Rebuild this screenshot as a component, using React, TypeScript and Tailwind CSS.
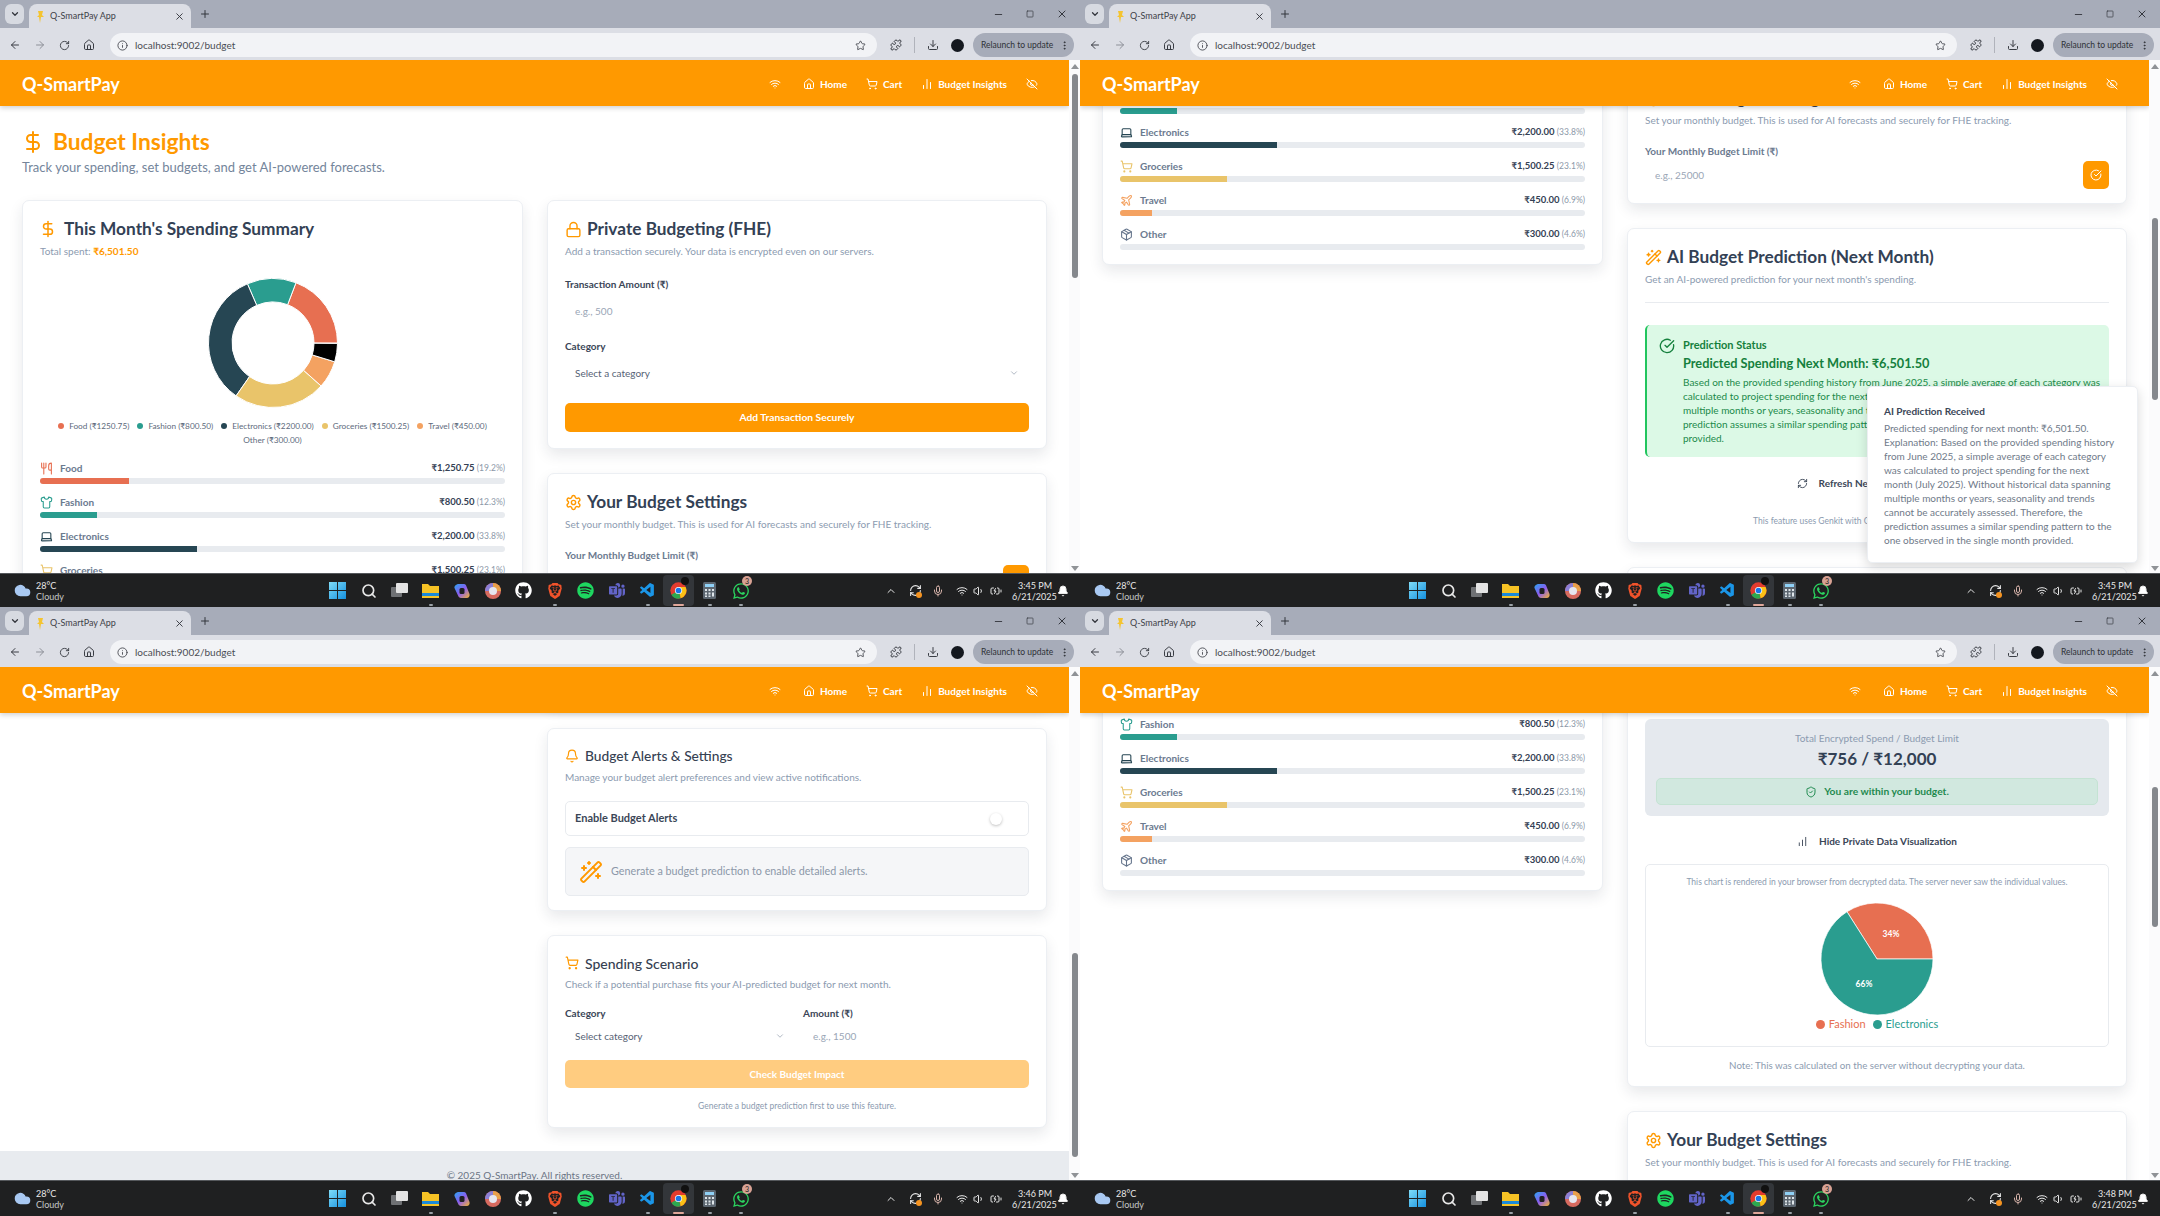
import {
  ArrowLeft, ArrowRight, Bell, BatteryCharging, ChartNoAxesColumn, ChartNoAxesColumnIncreasing, ChevronDown, ChevronUp,
  CircleCheckBig, Cloud, DollarSign, Download, EllipsisVertical, EyeOff, Home, Info, Laptop, Lock, Mic, Minus, Package,
  Plane, Plus, Puzzle, RefreshCw, RotateCw, Search, Settings, Shirt, ShieldCheck, ShoppingCart, Square, Star, Utensils,
  Volume1, WandSparkles, Wifi, X,
} from 'lucide-react';
import { BsMicrosoftTeams } from 'react-icons/bs';
import { FaGithub, FaSpotify, FaWhatsapp } from 'react-icons/fa';
import { SiBrave } from 'react-icons/si';
import { VscVscode } from 'react-icons/vsc';
import type { ReactNode } from 'react';

const categories = [
  { name: 'Food', amount: '₹1,250.75', legend: '₹1250.75', pct: 19.2, color: '#E76F51', Icon: Utensils },
  { name: 'Fashion', amount: '₹800.50', legend: '₹800.50', pct: 12.3, color: '#2A9D8F', Icon: Shirt },
  { name: 'Electronics', amount: '₹2,200.00', legend: '₹2200.00', pct: 33.8, color: '#264653', Icon: Laptop },
  { name: 'Groceries', amount: '₹1,500.25', legend: '₹1500.25', pct: 23.1, color: '#E9C46A', Icon: ShoppingCart },
  { name: 'Travel', amount: '₹450.00', legend: '₹450.00', pct: 6.9, color: '#F4A261', Icon: Plane },
  { name: 'Other', amount: '₹300.00', legend: '₹300.00', pct: 4.6, color: '#000000', Icon: Package },
];

const predictionLines = [
  'Based on the provided spending history from June 2025, a simple average of each category was',
  'calculated to project spending for the next month (July 2025). Without historical data spanning',
  'multiple months or years, seasonality and trends cannot be accurately assessed. Therefore, the',
  'prediction assumes a similar spending pattern to the one observed in the single month',
  'provided.',
];

const toastLines = [
  'Predicted spending for next month: ₹6,501.50.',
  'Explanation: Based on the provided spending history',
  'from June 2025, a simple average of each category',
  'was calculated to project spending for the next',
  'month (July 2025). Without historical data spanning',
  'multiple months or years, seasonality and trends',
  'cannot be accurately assessed. Therefore, the',
  'prediction assumes a similar spending pattern to the',
  'one observed in the single month provided.',
];

// start angle at 3 o'clock, going counter clockwise like the chart lib does
function slicePath(cx: number, cy: number, inner: number, outer: number, from: number, to: number) {
  const pt = (r: number, deg: number) => {
    const a = (deg * Math.PI) / 180;
    return `${(cx + r * Math.cos(a)).toFixed(2)} ${(cy - r * Math.sin(a)).toFixed(2)}`;
  };
  const large = to - from > 180 ? 1 : 0;
  if (inner === 0) return `M${cx} ${cy} L${pt(outer, from)} A${outer} ${outer} 0 ${large} 0 ${pt(outer, to)} Z`;
  return `M${pt(outer, from)} A${outer} ${outer} 0 ${large} 0 ${pt(outer, to)} L${pt(inner, to)} A${inner} ${inner} 0 ${large} 1 ${pt(inner, from)} Z`;
}

function Donut() {
  let angle = 0;
  return (
    <svg width="132" height="132" viewBox="0 0 132 132">
      {categories.map((c) => {
        const from = angle;
        angle += (c.pct / 100) * 360;
        return <path key={c.name} d={slicePath(66, 66, 41, 64.5, from, Math.min(angle, 360))} fill={c.color} stroke="#fff" strokeWidth="1" />;
      })}
    </svg>
  );
}

function Card({ children, className = '' }: { children: ReactNode; className?: string }) {
  return (
    <div className={`rounded-[7px] border border-[#eceff3] bg-white px-[17px] pt-[17px] shadow-[0_6px_14px_rgba(30,41,59,0.1)] ${className}`}>
      {children}
    </div>
  );
}

function CardTitle({ icon, title, desc }: { icon: ReactNode; title: string; desc: ReactNode }) {
  return (
    <>
      <div className="flex h-[22px] items-center gap-[5px]">
        {icon}
        <h2 className="text-[17.25px] font-bold text-[#334155]">{title}</h2>
      </div>
      <p className="mt-[4px] text-[10px] leading-[14px] text-[#8c9bb0]">{desc}</p>
    </>
  );
}

function Field({ label, placeholder }: { label: string; placeholder: string }) {
  return (
    <>
      <label className="block text-[10px] font-bold leading-[14px] text-[#3b4657]">{label}</label>
      <input placeholder={placeholder} className="mt-[5px] mb-[1px] h-[30px] w-full bg-transparent px-[10px] text-[10px] outline-none placeholder:text-[#9aa6b6]" />
    </>
  );
}

function SelectBox({ text }: { text: string }) {
  return (
    <div className="flex h-[30px] items-center justify-between px-[10px] text-[10px] text-[#566275]">
      {text}
      <ChevronDown size={10} className="text-[#a2acb9]" />
    </div>
  );
}

function SummaryCard() {
  return (
    <Card className="h-[469px]">
      <div className="-ml-[1px] flex h-[22px] items-center gap-[7px]">
        <DollarSign size={18} className="text-[#FF9900]" />
        <h2 className="text-[17.25px] font-bold text-[#334155]">This Month's Spending Summary</h2>
      </div>
      <p className="mt-[4px] text-[10px] leading-[14px] text-[#8c9bb0]">
        Total spent: <span className="font-bold text-[#FF9900]">₹6,501.50</span>
      </p>
      <div className="mt-[19px] flex justify-center">
        <Donut />
      </div>
      <div className="mt-[10px] flex flex-wrap justify-center gap-x-[8px] text-[8.25px] leading-[14px] text-[#5d6a7c]">
        {categories.map((c) => (
          <span key={c.name} className="flex items-center gap-[5px]">
            {c.name !== 'Other' && <i className="h-[6px] w-[6px] rounded-full" style={{ backgroundColor: c.color }} />}
            {c.name} ({c.legend})
          </span>
        ))}
      </div>
      <div className="mt-[12px] flex flex-col gap-[9px]">
        {categories.map((c) => (
          <div key={c.name}>
            <div className="flex h-[18px] items-center justify-between">
              <span className="flex items-center gap-[7px] text-[10px] font-bold text-[#6b7a8f]">
                <c.Icon size={13} style={{ color: c.name === 'Other' ? '#64748b' : c.color }} />
                {c.name}
              </span>
              <span className="text-[9.5px] font-bold text-[#344154]">
                {c.amount} <span className="text-[8.5px] font-normal text-[#8c98a8]">({c.pct}%)</span>
              </span>
            </div>
            <div className="mt-[1px] h-[6px] overflow-hidden rounded-full bg-[#e8ebef]">
              {c.name !== 'Other' && <div className="h-full" style={{ width: `${c.pct}%`, backgroundColor: c.color }} />}
            </div>
          </div>
        ))}
      </div>
    </Card>
  );
}

function FheResult() {
  return (
    <div className="-mb-[2px]">
      <div className="mt-[65px] h-[97px] rounded-[6px] bg-[#e5e9ee] px-[11px] pt-[12px] text-center">
        <p className="text-[10px] leading-[14px] text-[#8c9bb0]">Total Encrypted Spend / Budget Limit</p>
        <p className="mt-[2px] text-[17px] font-bold leading-[24px] text-[#334155]">₹756 / ₹12,000</p>
        <div className="mt-[7px] flex h-[27px] items-center justify-center gap-[7px] rounded-[5px] border border-[#c4e3d3] bg-[#d1e8df] text-[10.25px] font-bold text-[#1f8a4f]">
          <ShieldCheck size={12} />
          You are within your budget.
        </div>
      </div>
      <div className="mt-[13px] flex h-[24px] items-center justify-center gap-[11px] text-[10px] font-bold text-[#3b4657]">
        <ChartNoAxesColumnIncreasing size={11} />
        Hide Private Data Visualization
      </div>
      <div className="mt-[11px] h-[183px] rounded-[5px] border border-[#e8ebef] pt-[10px]">
        <p className="text-center text-[8.5px] leading-[14px] text-[#8c9bb0]">This chart is rendered in your browser from decrypted data. The server never saw the individual values.</p>
        <div className="mt-[13px] flex justify-center">
          <svg width="114" height="114" viewBox="0 0 114 114">
            <path d={slicePath(57, 57, 0, 56, 0, 122.4)} fill="#E76F51" stroke="#fff" strokeWidth="0.7" />
            <path d={slicePath(57, 57, 0, 56, 122.4, 360)} fill="#2A9D8F" stroke="#fff" strokeWidth="0.7" />
            <text x="71" y="35" textAnchor="middle" fontSize="8.5" fontWeight="700" fill="#fff">34%</text>
            <text x="44" y="85" textAnchor="middle" fontSize="8.5" fontWeight="700" fill="#fff">66%</text>
          </svg>
        </div>
        <div className="-mt-[1px] flex items-center justify-center gap-[7px] text-[11px] leading-[18px]">
          <span className="flex items-center gap-[4px] text-[#E76F51]"><i className="h-[9px] w-[9px] rounded-full bg-[#E76F51]" />Fashion</span>
          <span className="flex items-center gap-[4px] text-[#2A9D8F]"><i className="h-[9px] w-[9px] rounded-full bg-[#2A9D8F]" />Electronics</span>
        </div>
      </div>
      <p className="mt-[11px] text-center text-[9.75px] leading-[14px] text-[#8c9bb0]">Note: This was calculated on the server without decrypting your data.</p>
    </div>
  );
}

function Page({ showResult, scroll }: { showResult?: boolean; scroll: string }) {
  return (
    <div className={`w-full ${scroll}`}>
      <div className="h-[94px] px-[22px] pt-[23px]">
        <div className="flex h-[26px] items-center gap-[9px]">
          <DollarSign size={24} className="-ml-[1px] -mr-[1px] text-[#FF9900]" />
          <h1 className="text-[22.75px] font-bold text-[#FF9900]">Budget Insights</h1>
        </div>
        <p className="mt-[2px] text-[13px] leading-[20px] text-[#74859b]">Track your spending, set budgets, and get AI-powered forecasts.</p>
      </div>
      <div className="grid grid-cols-[501px_500px] items-start gap-x-[24px] px-[22px]">
        <SummaryCard />
        <div className="flex flex-col gap-[24px]">
          <Card className="pb-[16px]">
            <CardTitle icon={<Lock size={17} className="text-[#FF9900]" />} title="Private Budgeting (FHE)" desc="Add a transaction securely. Your data is encrypted even on our servers." />
            <div className="mt-[19px]">
              <Field label="Transaction Amount (₹)" placeholder="e.g., 500" />
            </div>
            <label className="mt-[12px] block text-[10px] font-bold leading-[14px] text-[#3b4657]">Category</label>
            <div className="mt-[5px]"><SelectBox text="Select a category" /></div>
            <button className="mt-[15px] h-[29px] w-full rounded-[5px] bg-[#FF9900] text-[10.25px] font-bold text-white">Add Transaction Securely</button>
            {showResult && <FheResult />}
          </Card>
          <Card className="pb-[13px]">
            <CardTitle icon={<Settings size={17} className="text-[#FF9900]" />} title="Your Budget Settings" desc="Set your monthly budget. This is used for AI forecasts and securely for FHE tracking." />
            <label className="mt-[17px] block text-[10px] font-bold leading-[14px] text-[#6b7a8f]">Your Monthly Budget Limit (₹)</label>
            <div className="mt-[2px] flex items-center justify-between">
              <input placeholder="e.g., 25000" className="h-[30px] flex-1 bg-transparent px-[10px] text-[10px] outline-none placeholder:text-[#9aa6b6]" />
              <button className="flex h-[28px] w-[26px] items-center justify-center rounded-[5px] bg-[#FF9900] text-white"><CircleCheckBig size={12} /></button>
            </div>
          </Card>
          <Card className="h-[315px]">
            <CardTitle icon={<WandSparkles size={17} className="text-[#FF9900]" />} title="AI Budget Prediction (Next Month)" desc="Get an AI-powered prediction for your next month's spending." />
            <hr className="mt-[16px] border-[#e8ebef]" />
            <div className="mt-[22px] flex h-[132px] rounded-[5px] border-l-[2.5px] border-[#22C55E] bg-[#DCF9E6] pl-[12px] pt-[13px] text-[#1b8a4a]">
              <CircleCheckBig size={16} className="shrink-0 text-[#15803D]" />
              <div className="ml-[8px]">
                <p className="text-[11px] font-bold leading-[14px] text-[#15803D]">Prediction Status</p>
                <p className="mt-[2px] text-[12.75px] font-bold leading-[18px] text-[#15803D]">Predicted Spending Next Month: ₹6,501.50</p>
                <div className="mt-[3px] text-[10px] leading-[14px]">
                  {predictionLines.map((l) => <div key={l} className="whitespace-nowrap">{l}</div>)}
                </div>
              </div>
            </div>
            <div className="mt-[14px] flex h-[24px] items-center justify-center gap-[11px] text-[10px] font-bold text-[#3b4657]">
              <RefreshCw size={11} />
              Refresh Next Month Prediction
            </div>
            <p className="mt-[19px] text-center text-[8.5px] leading-[14px] text-[#8c9bb0]">This feature uses Genkit with Gemini to analyze spending patterns.</p>
          </Card>
          <Card className="h-[183px]">
            <div className="flex h-[20px] items-center gap-[6px]">
              <Bell size={14} className="text-[#FF9900]" />
              <h2 className="text-[13.75px] font-medium text-[#364152]">Budget Alerts &amp; Settings</h2>
            </div>
            <p className="mt-[4px] text-[10px] leading-[14px] text-[#8c9bb0]">Manage your budget alert preferences and view active notifications.</p>
            <div className="mt-[17px] flex h-[35px] items-center justify-between rounded-[5px] border border-[#e8ebef] pl-[9px] pr-[26px] text-[11px] font-bold text-[#3b4657]">
              Enable Budget Alerts
              <i className="h-[12px] w-[12px] rounded-full bg-white shadow-[0_1px_3px_rgba(0,0,0,0.25)]" />
            </div>
            <div className="mt-[11px] flex h-[49px] items-center gap-[8px] rounded-[5px] border border-[#e8ebef] bg-[#f5f6f8] pl-[13px] text-[10.75px] text-[#8c98a8]">
              <WandSparkles size={24} className="text-[#FF9900]" />
              Generate a budget prediction to enable detailed alerts.
            </div>
          </Card>
          <Card className="h-[193px]">
            <div className="flex h-[20px] items-center gap-[6px]">
              <ShoppingCart size={14} className="text-[#FF9900]" />
              <h2 className="text-[14px] font-medium text-[#364152]">Spending Scenario</h2>
            </div>
            <p className="mt-[4px] text-[10px] leading-[14px] text-[#8c9bb0]">Check if a potential purchase fits your AI-predicted budget for next month.</p>
            <div className="mt-[15px] grid grid-cols-[230px_1fr] gap-x-[8px]">
              <div>
                <label className="block text-[10px] font-bold leading-[14px] text-[#3b4657]">Category</label>
                <div className="mt-[1px]"><SelectBox text="Select category" /></div>
              </div>
              <div>
                <label className="block text-[10px] font-bold leading-[14px] text-[#3b4657]">Amount (₹)</label>
                <div className="mt-[1px]"><input placeholder="e.g., 1500" className="h-[30px] w-full bg-transparent px-[10px] text-[10px] outline-none placeholder:text-[#9aa6b6]" /></div>
              </div>
            </div>
            <button className="mt-[9px] h-[28px] w-full rounded-[5px] bg-[#FFCC80] text-[10px] font-bold text-white">Check Budget Impact</button>
            <p className="mt-[11px] text-center text-[8.5px] leading-[14px] text-[#8c9bb0]">Generate a budget prediction first to use this feature.</p>
          </Card>
        </div>
      </div>
      <footer className="mt-[23px] h-[60px] bg-[#e8ebef] pt-[17px] text-center text-[10px] leading-[14px] text-[#6b7585]">© 2025 Q-SmartPay. All rights reserved.</footer>
    </div>
  );
}

function BrowserChrome() {
  return (
    <>
      <div className="flex h-[28px] items-end bg-[#a7acb9] pl-[5px] pr-[12px] text-[#33363d]">
        <span className="mb-[4px] flex h-[20px] w-[19px] items-center justify-center rounded-[6px] bg-[#d7dae1]"><ChevronDown size={10} strokeWidth={3} /></span>
        <div className="ml-[5px] flex h-[24px] w-[162px] items-center rounded-t-[8px] bg-[#dcdee5] pl-[7px] pr-[6px] text-[9px]">
          <svg width="9" height="13" viewBox="0 0 9 13"><path d="M2 1h5l-1 4 2 2H5l-1 6-1-6H1l2-2z" fill="#f4c430" /></svg>
          <span className="ml-[5px] flex-1 text-[#3f4249]">Q-SmartPay App</span>
          <X size={11} />
        </div>
        <Plus size={12} className="mb-[8px] ml-[8px]" />
        <div className="mb-[8px] ml-auto flex items-center gap-[22px]">
          <Minus size={11} />
          <Square size={8} />
          <X size={12} />
        </div>
      </div>
      <div className="flex h-[32px] items-center bg-[#dcdee5] pl-[9px] pr-[4px] pt-[2px] text-[#3a3d44]">
        <div className="flex w-[101px] items-center gap-[13px]">
          <ArrowLeft size={12} />
          <ArrowRight size={12} className="text-[#8d9098]" />
          <RotateCw size={11} />
          <Home size={12} />
        </div>
        <div className="flex h-[24px] w-[767px] items-center rounded-full bg-[#f2f3f6] pl-[7px] pr-[11px] text-[10px] text-[#4a4d54]">
          <Info size={11} />
          <span className="ml-[7px] flex-1">localhost:9002/budget</span>
          <Star size={11} />
        </div>
        <Puzzle size={12} className="ml-[13px]" />
        <span className="ml-[12px] h-[16px] w-px bg-[#b0b3bb]" />
        <Download size={12} className="ml-[12px]" />
        <span className="ml-[12px] h-[13px] w-[13px] rounded-full bg-[#14181f]" />
        <div className="ml-[9px] flex h-[24px] w-[101px] items-center justify-between whitespace-nowrap rounded-full bg-[#a7acb9] pl-[8px] pr-[4px] text-[8.5px] text-[#2e3137]">
          Relaunch to update
          <EllipsisVertical size={11} />
        </div>
      </div>
    </>
  );
}

function Navbar() {
  return (
    <nav className="relative z-10 flex h-[46px] w-[1069px] shrink-0 items-center justify-between bg-[#FF9900] pl-[22px] pr-[31px] pt-[2px] text-white shadow-[0_2px_5px_rgba(0,0,0,0.18)]">
      <span className="text-[18px] font-bold">Q-SmartPay</span>
      <div className="flex items-center gap-[19px] text-[10px] font-bold">
        <Wifi size={12} className="mr-[3px]" />
        <span className="flex items-center gap-[5px]"><Home size={12} />Home</span>
        <span className="flex items-center gap-[5px]"><ShoppingCart size={12} />Cart</span>
        <span className="flex items-center gap-[5px]"><ChartNoAxesColumn size={12} />Budget Insights</span>
        <EyeOff size={12} />
      </div>
    </nav>
  );
}

function TaskIcon({ children, running, active }: { children: ReactNode; running?: boolean; active?: boolean }) {
  return (
    <div className={`relative flex h-[31px] w-[31px] items-center justify-center rounded-[4px] ${active ? 'bg-[#33363a]' : ''}`}>
      {children}
      {running && <i className={`absolute bottom-0 h-[2px] rounded-full ${active ? 'w-[11px] bg-[#e0a79a]' : 'w-[4px] bg-[#9aa0a6]'}`} />}
    </div>
  );
}

function Taskbar({ time }: { time: string }) {
  return (
    <div className="flex flex-1 items-center border-t border-[#55585c] bg-[#1f2021] text-[9px] leading-[11px] text-[#e8e8e8]">
      <div className="ml-[14px] flex w-[308px] items-center gap-[5px]">
        <Cloud size={17} className="fill-[#a9c9f2] text-[#a9c9f2]" />
        <div>
          <div>28°C</div>
          <div className="text-[#c8c8c8]">Cloudy</div>
        </div>
      </div>
      <div className="flex items-center">
        <TaskIcon>
          <svg width="17" height="17" viewBox="0 0 17 17"><defs><linearGradient id="win" x1="0" y1="0" x2="1" y2="1"><stop offset="0" stopColor="#7fdcf8" /><stop offset="1" stopColor="#1490df" /></linearGradient></defs><path d="M0 0h8v8H0zM9 0h8v8H9zM0 9h8v8H0zM9 9h8v8H9z" fill="url(#win)" /></svg>
        </TaskIcon>
        <TaskIcon><Search size={16} strokeWidth={2.5} /></TaskIcon>
        <TaskIcon>
          <svg width="17" height="15" viewBox="0 0 17 15"><rect x="0" y="4" width="11" height="10" rx="1" fill="#6f7174" /><rect x="5" y="0" width="12" height="10" rx="1" fill="#e4e4e4" /></svg>
        </TaskIcon>
        <TaskIcon running>
          <svg width="17" height="16" viewBox="0 0 17 16"><path d="M0 1h6l2 2h9v12H0z" fill="#f7c325" /><rect y="10" width="17" height="3" fill="#1c8ad8" /></svg>
        </TaskIcon>
        <TaskIcon>
          <svg width="16" height="16" viewBox="0 0 16 16"><defs><linearGradient id="cop" x1="0" y1="0" x2="1" y2="1"><stop offset="0" stopColor="#2aa5f0" /><stop offset=".5" stopColor="#8a5cf0" /><stop offset="1" stopColor="#f5b52e" /></linearGradient></defs><path d="M5 1h5c1.5 0 2 1 2.5 2.5L15.500 11c.5 2-.5 4-3 4H7c-1.500 0-2.500-1-3-2.500L.5 5C0 3 2.500 1 5 1z" fill="url(#cop)" /><rect x="5.500" y="5" width="5" height="6" rx="1.500" fill="#1f2021" /></svg>
        </TaskIcon>
        <TaskIcon>
          <svg width="16" height="16" viewBox="0 0 16 16"><circle cx="8" cy="8" r="8" fill="#d76a5f" /><path d="M8 0a8 8 0 0 1 8 8H8z" fill="#e8a04a" /><path d="M0 8a8 8 0 0 1 8-8v8z" fill="#8b7fd6" /><circle cx="8" cy="8" r="4" fill="#e6e6ef" /></svg>
        </TaskIcon>
        <TaskIcon><FaGithub size={17} className="text-white" /></TaskIcon>
        <TaskIcon running><SiBrave size={16} className="text-[#f0532b]" /></TaskIcon>
        <TaskIcon><FaSpotify size={17} className="text-[#1ed760]" /></TaskIcon>
        <TaskIcon><BsMicrosoftTeams size={16} className="text-[#6264c8]" /></TaskIcon>
        <TaskIcon running><VscVscode size={17} className="text-[#1b96e8]" /></TaskIcon>
        <TaskIcon running active>
          <svg width="17" height="17" viewBox="0 0 48 48"><circle cx="24" cy="24" r="23" fill="#e33b2e" /><path d="M24 24 4 36A23 23 0 0 0 30 46z" fill="#2da94f" /><path d="M24 14h20a23 23 0 0 1-14 32z" fill="#fbc116" /><circle cx="24" cy="24" r="10" fill="#fff" /><circle cx="24" cy="24" r="8" fill="#1a73e8" /></svg>
          <i className="absolute right-[5px] top-[2px] h-[8px] w-[8px] rounded-full bg-[#111]" />
        </TaskIcon>
        <TaskIcon running>
          <svg width="13" height="17" viewBox="0 0 13 17"><rect width="13" height="17" rx="1.500" fill="#5c6670" /><rect x="2" y="2" width="9" height="3" fill="#8fd0f5" /><path d="M2 7h2v2H2zM5.500 7h2v2h-2zM9 7h2v2H9zM2 10.500h2v2H2zM5.500 10.500h2v2h-2zM9 10.500h2v4H9zM2 13.500h2v1.500H2zM5.500 13.500h2v1.500h-2z" fill="#dfe6ea" /></svg>
        </TaskIcon>
        <TaskIcon running>
          <FaWhatsapp size={18} className="text-[#2bd45f]" />
          <i className="absolute right-[4px] top-[1px] flex h-[10px] w-[10px] items-center justify-center rounded-full bg-[#d9a294] text-[7px] not-italic text-[#222]">3</i>
        </TaskIcon>
      </div>
      <div className="ml-auto flex items-center pr-[11px]">
        <ChevronUp size={12} />
        <span className="relative ml-[12px]">
          <RefreshCw size={13} />
          <i className="absolute -bottom-[1px] right-0 h-[6px] w-[6px] rounded-full bg-[#f59320]" />
        </span>
        <Mic size={12} className="ml-[10px] text-[#d8b4ab]" />
        <Wifi size={12} className="ml-[12px]" />
        <Volume1 size={12} className="ml-[5px]" />
        <BatteryCharging size={12} className="ml-[5px]" />
        <div className="ml-[10px] w-[40px] text-right">
          <div>{time}</div>
          <div>6/21/2025</div>
        </div>
        <Bell size={12} className="ml-[5px] fill-white" />
      </div>
    </div>
  );
}

function Scrollbar({ offset, size }: { offset: string; size: string }) {
  return (
    <div className="relative flex w-[11px] shrink-0 flex-col items-center bg-[#fbfbfc]">
      <span className="mt-[4px] h-0 w-0 border-x-[4px] border-b-[5px] border-x-transparent border-b-[#8f9296]" />
      <div className={`w-[6px] rounded-full bg-[#85888d] ${offset} ${size}`} />
      <span className="absolute bottom-[2px] h-0 w-0 border-x-[4px] border-t-[5px] border-x-transparent border-t-[#8f9296]" />
    </div>
  );
}

function Pane({ children, scrollbar, time, toast }: { children: ReactNode; scrollbar: ReactNode; time: string; toast?: boolean }) {
  return (
    <section className="relative flex min-h-0 min-w-0 flex-col overflow-hidden">
      <BrowserChrome />
      <div className="flex h-[513px] shrink-0 bg-white">
        <div className="flex w-[1069px] flex-col overflow-hidden">
          <Navbar />
          <div className="h-[467px] overflow-hidden">{children}</div>
        </div>
        {scrollbar}
      </div>
      <Taskbar time={time} />
      {toast && (
        <div className="absolute bottom-[44px] right-[22px] h-[177px] w-[271px] rounded-[5px] border border-[#eceff3] bg-white px-[16px] pt-[17px] shadow-[0_4px_12px_rgba(0,0,0,0.15)]">
          <p className="text-[10px] font-bold leading-[14px] text-[#3b4657]">AI Prediction Received</p>
          <div className="mt-[3px] text-[10px] leading-[14px] text-[#6f7a89]">
            {toastLines.map((l) => <div key={l} className="whitespace-nowrap">{l}</div>)}
          </div>
        </div>
      )}
    </section>
  );
}

export default function App() {
  return (
    <div className="grid h-[1216px] w-[2160px] grid-cols-2 grid-rows-[607px_609px] overflow-hidden bg-white font-['Lato','Noto_Sans',sans-serif]">
      <Pane time="3:45 PM" scrollbar={<Scrollbar offset="mt-[5px]" size="h-[204px]" />}>
        <Page scroll="mt-0" />
      </Pane>
      <Pane time="3:45 PM" toast scrollbar={<Scrollbar offset="mt-[149px]" size="h-[182px]" />}>
        <Page scroll="-mt-[404px]" />
      </Pane>
      <Pane time="3:46 PM" scrollbar={<Scrollbar offset="mt-[277px]" size="h-[204px]" />}>
        <Page scroll="-mt-[850px]" />
      </Pane>
      <Pane time="3:48 PM" scrollbar={<Scrollbar offset="mt-[111px]" size="h-[140px]" />}>
        <Page scroll="-mt-[385px]" showResult />
      </Pane>
    </div>
  );
}
